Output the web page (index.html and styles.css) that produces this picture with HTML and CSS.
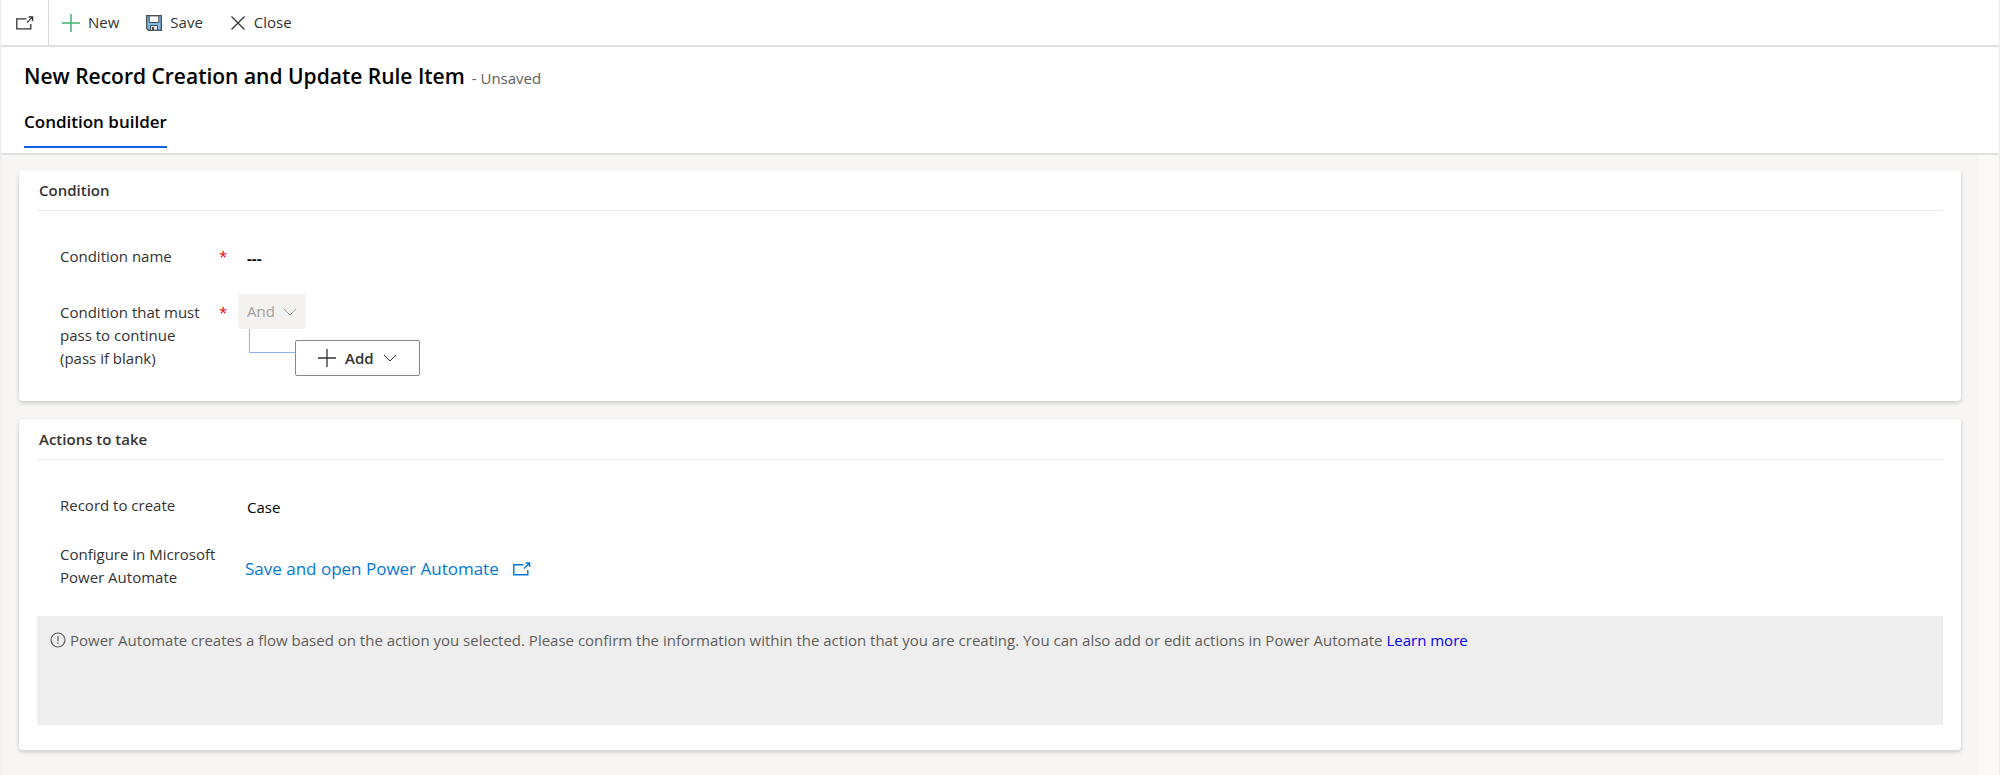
FILE: index.html
```html
<!DOCTYPE html>
<html lang="en">
<head>
  <meta charset="UTF-8">
  <meta name="viewport" content="width=device-width, initial-scale=1">
  <title>New Record Creation and Update Rule Item</title>
  <link rel="stylesheet" href="styles.css">
</head>
<body>
  <div class="command-bar">
    <button class="popout-btn" aria-label="Open in new window">
      <svg width="18" height="14" viewBox="0 0 18 14" fill="none" stroke="currentColor" stroke-width="1.3">
        <path d="M10.5 2.8H.8v10h14V8M11 6.6l5.2-5.2M12.6 1h4v4"/>
      </svg>
    </button>
    <button class="command-btn">
      <svg class="icon-new" width="18" height="18" viewBox="0 0 18 18" fill="none" stroke="currentColor" stroke-width="1.5">
        <path d="M9 0v18M0 9h18"/>
      </svg>
      New
    </button>
    <button class="command-btn">
      <svg width="16" height="16" viewBox="0 0 16 16">
        <path d="M.7.7h14.6v14.6H2.4L.7 13.6z" fill="#7dbdec" stroke="#454b52" stroke-width="1.3"/>
        <path d="M3.2.9h9.6v6.6H3.2z" fill="#fff" stroke="#454b52"/>
        <path d="M4.5 10.5h7v4.8h-7z" fill="#e3e3e3" stroke="#454b52"/>
        <path d="M6 12h2v3H6z" fill="#454b52"/>
      </svg>
      Save
    </button>
    <button class="command-btn">
      <svg width="16" height="16" viewBox="0 0 16 16" fill="none" stroke="currentColor" stroke-width="1.3">
        <path d="M1.5 1.5l13 13M14.5 1.5l-13 13"/>
      </svg>
      Close
    </button>
  </div>

  <header class="form-header">
    <div class="title-row">
      <h1>New Record Creation and Update Rule Item</h1>
      <span class="status">- Unsaved</span>
    </div>
    <div class="tabs" role="tablist">
      <button class="tab" role="tab" aria-selected="true">Condition builder</button>
    </div>
  </header>

  <main class="form-body">
    <section class="card card-condition">
      <h2>Condition</h2>
      <div class="fields">
        <div class="field">
          <label for="conditionName">Condition name</label>
          <span class="required">*</span>
          <input type="text" id="conditionName" class="text-value placeholder-value" value="---">
        </div>
        <div class="field field-builder">
          <label for="operator">Condition that must pass to continue (pass if blank)</label>
          <span class="required">*</span>
          <div class="builder">
            <div class="operator">
              <select id="operator" disabled>
                <option>And</option>
              </select>
              <svg width="14" height="8" viewBox="0 0 14 8" fill="none" stroke="currentColor">
                <path d="M1 1l6 6 6-6"/>
              </svg>
            </div>
            <div class="branch">
              <div class="branch-line"></div>
              <button class="add-btn">
                <svg width="18" height="18" viewBox="0 0 18 18" fill="none" stroke="currentColor" stroke-width="1.3">
                  <path d="M9 0v18M0 9h18"/>
                </svg>
                Add
                <svg width="14" height="8" viewBox="0 0 14 8" fill="none" stroke="currentColor">
                  <path d="M1 1l6 6 6-6"/>
                </svg>
              </button>
            </div>
          </div>
        </div>
      </div>
    </section>

    <section class="card card-actions">
      <h2>Actions to take</h2>
      <div class="fields">
        <div class="field">
          <label for="recordType">Record to create</label>
          <span class="required"></span>
          <input type="text" id="recordType" class="text-value" value="Case" readonly>
        </div>
        <div class="field">
          <span class="label">Configure in Microsoft Power Automate</span>
          <span class="required"></span>
          <a class="flow-link" href="#">
            Save and open Power Automate
            <svg width="18" height="14" viewBox="0 0 18 14" fill="none" stroke="currentColor" stroke-width="1.4">
              <path d="M10.5 2.8H.8v10h14V8M11 6.6l5.2-5.2M12.6 1h4v4"/>
            </svg>
          </a>
        </div>
      </div>
      <div class="notice">
        <svg width="16" height="16" viewBox="0 0 16 16" fill="none" stroke="currentColor" stroke-width="1.2">
          <circle cx="8" cy="8" r="7"/>
          <path d="M8 4v5.2M8 10.6v1.4"/>
        </svg>
        <p>Power Automate creates a flow based on the action you selected. Please confirm the information within the action that you are creating. You can also add or edit actions in Power Automate <a href="#">Learn more</a></p>
      </div>
    </section>
  </main>
</body>
</html>
```

FILE: styles.css
```css
* {
  box-sizing: border-box;
}
body {
  margin: 0;
  min-height: 100vh;
  display: flex;
  flex-direction: column;
  border-left: 1px solid #ededed;
  border-right: 1px solid #ededed;
  background-color: #fff;
  color: #333;
  font-family: "Segoe UI", "Open Sans", "Noto Sans", sans-serif;
  font-size: 15px;
  line-height: 23px;
}
button, input, select {
  font: inherit;
  color: inherit;
  border: none;
  background: none;
  padding: 0;
  margin: 0;
}
button {
  cursor: pointer;
}
h1, h2, p {
  margin: 0;
}
svg {
  flex: none;
}

/* command bar */
.command-bar {
  display: flex;
  height: 47px;
  border-bottom: 2px solid #e1e1e1;
}
.popout-btn {
  display: flex;
  align-items: center;
  justify-content: center;
  width: 48px;
  border-right: 1px solid #d8d8d8;
}
.command-btn {
  display: flex;
  align-items: center;
  gap: 8px;
  padding: 0 14px 0 13px;
}
.icon-new {
  color: #3fb56f;
}

/* header */
.form-header {
  padding: 15px 23px 5px;
  border-bottom: 2px solid #e1e1e1;
}
.title-row {
  display: flex;
  align-items: baseline;
  gap: 7px;
}
h1 {
  color: #000;
  font-size: 21px;
  font-weight: 600;
  line-height: 28px;
}
.status {
  color: #605e5c;
}
.tabs {
  display: flex;
  margin-top: 15px;
}
.tab {
  padding: 5px 0 13px;
  border-bottom: 2px solid #1160e8;
  color: #000;
  font-size: 17px;
  font-weight: 600;
}

/* form */
.form-body {
  flex: 1;
  display: flex;
  flex-direction: column;
  gap: 18px;
  padding: 15px 18px 25px;
  border-right: 20px solid #faf9f8;
  background-color: #f7f6f5;
}
.card {
  padding: 0 18px 25px;
  border-radius: 4px;
  background-color: #fff;
  box-shadow: 0 2px 4px rgba(0, 0, 0, 0.18);
}
h2 {
  padding: 9px 2px 8px;
  border-bottom: 1px solid #ebebeb;
  font-size: 15px;
  font-weight: 600;
  line-height: 23px;
}
.fields {
  display: grid;
  gap: 22px;
  padding: 34px 23px 0;
}
.field {
  display: flex;
  align-items: flex-start;
}
.field label, .label {
  width: 159px;
}
.field label {
  padding-right: 16px;
}
.required {
  width: 19px;
  color: #e50000;
}
.text-value {
  flex: 1;
  padding: 2px 9px;
  color: #000;
}
.placeholder-value {
  font-weight: 700;
}

/* condition builder */
.field-builder label,
.field-builder .required {
  padding-top: 7px;
}
.operator {
  display: inline-flex;
  align-items: center;
  gap: 8px;
  height: 35px;
  padding: 0 9px;
  border-radius: 2px;
  background-color: #f3f2f1;
  color: #a19f9d;
}
.operator select {
  appearance: none;
  opacity: 1;
}
.branch {
  display: flex;
}
.branch-line {
  width: 46px;
  height: 24px;
  margin-left: 11px;
  border-left: 1px solid #8fb2f8;
  border-bottom: 1px solid #8fb2f8;
}
.add-btn {
  display: flex;
  align-items: center;
  gap: 9px;
  height: 36px;
  margin-top: 11px;
  padding: 0 22px;
  border: 1px solid #8a8886;
  border-radius: 2px;
  font-weight: 600;
}

/* actions */
.flow-link {
  display: flex;
  align-items: center;
  gap: 14px;
  padding: 14px 7px 0;
  color: #0078d4;
  font-size: 17px;
  text-decoration: none;
}
.notice {
  display: flex;
  align-items: flex-start;
  gap: 4px;
  min-height: 109px;
  margin-top: 27px;
  padding: 13px;
  background-color: #eee;
  color: #605e5c;
}
.notice svg {
  margin-top: 3px;
}
.notice a {
  color: #0000ee;
  text-decoration: none;
}
```
